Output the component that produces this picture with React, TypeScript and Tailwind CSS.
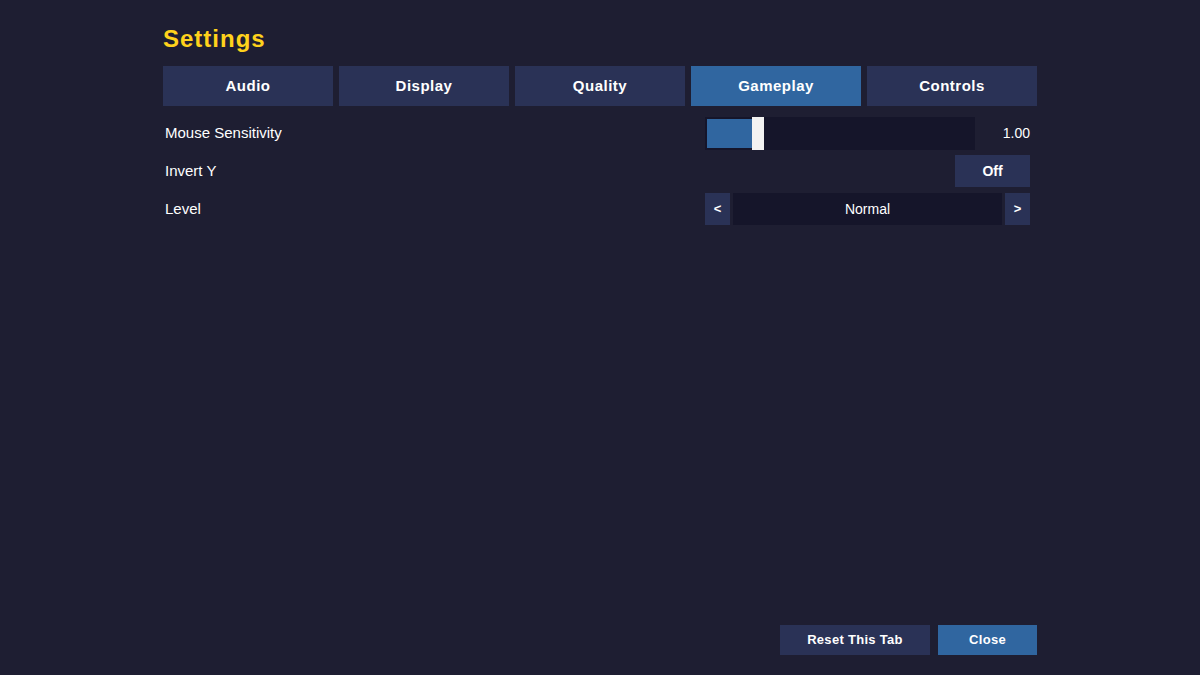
import { useState } from "react";

const tabs = ["Audio", "Display", "Quality", "Gameplay", "Controls"];

export default function App() {
  const [active, setActive] = useState("Gameplay");
  const [invert, setInvert] = useState(false);
  const sensitivity = 1.0;

  return (
    <div className="min-h-screen w-full bg-[#1e1e32] font-['Liberation_Sans',Arial,sans-serif] text-white">
      <div className="mx-auto flex h-[675px] w-[874px] flex-col">
        <h1 className="pt-[24px] text-[24px] font-bold leading-[30px] tracking-[1px] text-[#ffd21c]">Settings</h1>

        <div className="mt-[12px] grid grid-cols-5 gap-[6px]">
          {tabs.map((t) => (
            <button
              key={t}
              onClick={() => setActive(t)}
              className={`h-[40px] pt-[1px] text-[15px] font-bold tracking-[0.5px] ${
                t === active ? "bg-[#3066a0]" : "bg-[#2a3256]"
              }`}
            >
              {t}
            </button>
          ))}
        </div>

        <div className="mt-[11px] flex flex-col pl-[2px] pr-[7px]">
          <div className="flex h-[33px] items-center justify-between">
            <span className="text-[15px]">Mouse Sensitivity</span>
            <div className="flex w-[325px] items-center">
              <div className="relative h-[33px] w-[270px] bg-[#15152a] p-[2px]">
                <div className="h-full w-[45px] bg-[#3066a0]" />
                <div className="absolute left-[47px] top-0 h-[33px] w-[12px] bg-[#f2f2f2]" />
              </div>
              <span className="flex-1 text-right text-[14px]">{sensitivity.toFixed(2)}</span>
            </div>
          </div>

          <div className="mt-[5px] flex h-[32px] items-center justify-between">
            <span className="text-[15px]">Invert Y</span>
            <button
              onClick={() => setInvert(!invert)}
              className="h-[32px] w-[75px] bg-[#2a3256] text-[14px] font-bold"
            >
              {invert ? "On" : "Off"}
            </button>
          </div>

          <div className="mt-[6px] flex h-[32px] items-center justify-between">
            <span className="text-[15px]">Level</span>
            <div className="flex w-[325px] gap-[3px]">
              <button className="h-[32px] w-[25px] bg-[#2a3256] text-[13px] font-bold">&lt;</button>
              <div className="flex h-[32px] flex-1 items-center justify-center bg-[#15152a] text-[14px]">Normal</div>
              <button className="h-[32px] w-[25px] bg-[#2a3256] text-[13px] font-bold">&gt;</button>
            </div>
          </div>
        </div>

        <div className="mt-auto mb-[20px] flex justify-end gap-[8px]">
          <button className="h-[30px] w-[150px] bg-[#2a3256] text-[13px] font-bold tracking-[0.3px]">Reset This Tab</button>
          <button className="h-[30px] w-[99px] bg-[#3066a0] text-[13px] font-bold tracking-[0.3px]">Close</button>
        </div>
      </div>
    </div>
  );
}
